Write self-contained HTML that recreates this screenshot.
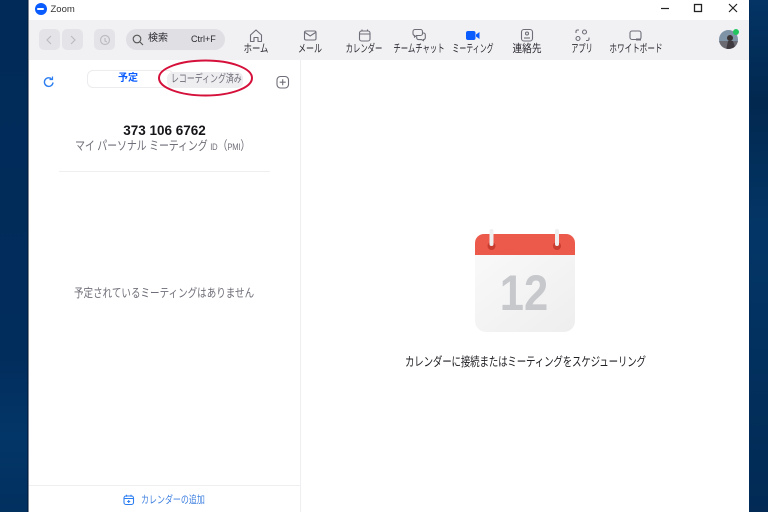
<!DOCTYPE html>
<html lang="ja"><head><meta charset="utf-8"><style>
html,body{margin:0;padding:0}
body{width:768px;height:512px;position:relative;overflow:hidden;background:#012d5c;font-family:"Liberation Sans","Noto Sans CJK JP",sans-serif}
#bgl{position:absolute;left:0;top:0;width:27px;height:512px;background:linear-gradient(180deg,#012a58 0%,#012d5c 70%,#033668 85%,#02305f 100%)}
#bgr{position:absolute;left:750px;top:0;width:18px;height:512px;background:linear-gradient(180deg,#033465 0%,#02284f 20%,#033667 45%,#02305e 70%,#022a55 100%)}
#win{position:absolute;left:29px;top:0;width:720px;height:512px;background:#fff}
#edge{position:absolute;left:28px;top:0;width:1px;height:512px;background:#7d8794}
#edge2{position:absolute;left:27px;top:0;width:1px;height:512px;background:#01204a}
#tb{position:absolute;left:29px;top:20px;width:720px;height:40px;background:#f1f1f4}
.t{position:absolute;white-space:nowrap;line-height:1;transform-origin:left center}
.n{position:absolute;top:43px;font-size:11px;color:#2a2a30;line-height:12px;white-space:nowrap}
svg{position:absolute;overflow:visible}
.btn{position:absolute;top:29px;width:21px;height:21px;border-radius:5px;background:#e4e4e8}
</style></head><body>
<div id="bgl"></div><div id="bgr"></div><div id="edge2"></div><div id="edge"></div><div id="win"></div><div id="tb"></div>

<div style="position:absolute;left:34.500px;top:2.500px;width:12px;height:12px;border-radius:50%;background:#0b5cff"></div>
<div style="position:absolute;left:37px;top:7.500px;width:7px;height:2px;background:#fff;border-radius:1px"></div>
<div class="t" style="left:50.500px;top:4.500px;font-size:9.500px;color:#333">Zoom</div>

<svg style="left:0;top:0" width="768" height="20" fill="none" stroke="#222" stroke-width="1.200">
<path d="M661 8.500h8"/><rect x="694.500" y="4.500" width="7" height="7" stroke-width="1.300"/><path d="M729 4l8 8M737 4l-8 8"/></svg>

<div class="btn" style="left:38.500px"></div><div class="btn" style="left:62px"></div><div class="btn" style="left:94px"></div>
<svg style="left:0;top:20px" width="240" height="40" fill="none" stroke="#bcbcc2" stroke-width="1.200">
<path d="M51 16l-4 4 4 4M71 16l4 4-4 4"/>
<circle cx="105" cy="20" r="4.500"/><path d="M105 18v3l2 1"/>
</svg>
<div style="position:absolute;left:126px;top:29px;width:99px;height:21px;border-radius:10.500px;background:#dfdfe4"></div>
<svg style="left:132px;top:34px" width="12" height="12" fill="none" stroke="#555" stroke-width="1.100"><circle cx="5" cy="5" r="3.800"/><path d="M8 8l3 3"/></svg>
<div class="t" style="left:148px;top:34px;font-size:10px;color:#2a2a30">検索</div>
<div class="t" style="left:191px;top:35px;font-size:9px;color:#2a2a30">Ctrl+F</div>

<svg style="left:0;top:0" width="768" height="60" fill="none" stroke="#6e6e78" stroke-width="1.100">
<path d="M250.500 35l5.500-5 5.500 5v6.500h-3.500v-4h-4v4h-3.500z" stroke-linejoin="round"/>
<rect x="304.500" y="31" width="11.500" height="9" rx="1.500"/><path d="M305 32.500l5.200 3.500 5.300-3.500"/>
<rect x="359.500" y="31" width="10.500" height="10" rx="2"/><path d="M359.500 34h10.500M362 29.500v2M367.500 29.500v2"/>
<path d="M415 29.500h5.500a2 2 0 0 1 2 2v2a2 2 0 0 1-2 2h-4l-2 1.500v-1.500a2 2 0 0 1-1.500-2v-2a2 2 0 0 1 2-2z"/>
<path d="M422.500 33h1a1.800 1.800 0 0 1 1.800 1.800v3a1.800 1.800 0 0 1-1.800 1.800v1l-2-1h-3a1.800 1.800 0 0 1-1.800-1.800v-1.500"/>
<rect x="521.500" y="29.500" width="11" height="11.500" rx="2.500"/><circle cx="527" cy="33.500" r="1.500"/><path d="M524 38h6"/>
<path d="M579 30h-1.500a1.500 1.500 0 0 0-1.500 1.500v1.500M586 40.500h1.500a1.500 1.500 0 0 0 1.500-1.500v-1.500"/>
<circle cx="584.500" cy="32" r="2"/><circle cx="578" cy="38.500" r="2"/>
<rect x="630" y="31" width="11" height="8.500" rx="2"/><path d="M636 39.500h5" stroke-width="2"/>
</svg>
<svg style="left:466px;top:30.500px" width="14" height="10"><rect x="0" y="0" width="9.500" height="9" rx="2" fill="#0b5cff"/><path d="M10 3.500L13.500 1v7L10 5.500z" fill="#0b5cff"/></svg>

<div class="n" style="left:255.500px;transform:translateX(-50%) scaleX(.76)">ホーム</div>
<div class="n" style="left:310px;transform:translateX(-50%) scaleX(.73)">メール</div>
<div class="n" style="left:363.500px;transform:translateX(-50%) scaleX(.67)">カレンダー</div>
<div class="n" style="left:419px;transform:translateX(-50%) scaleX(.67)">チームチャット</div>
<div class="n" style="left:472.500px;transform:translateX(-50%) scaleX(.63)">ミーティング</div>
<div class="n" style="left:526.500px;transform:translateX(-50%) scaleX(.88)">連絡先</div>
<div class="n" style="left:581.500px;transform:translateX(-50%) scaleX(.65)">アプリ</div>
<div class="n" style="left:635.500px;transform:translateX(-50%) scaleX(.69)">ホワイトボード</div>

<svg style="left:719px;top:30px" width="20" height="20"><defs><clipPath id="a"><circle cx="9.500" cy="9.500" r="9.500"/></clipPath></defs><g clip-path="url(#a)"><rect width="20" height="20" fill="#7f93a6"/><rect y="11" width="20" height="9" fill="#6b6a72"/><circle cx="11" cy="8" r="3" fill="#3a3233"/><path d="M7 20l2-9h5l3 9z" fill="#3f3a40"/></g></svg>
<div style="position:absolute;left:733px;top:29px;width:6px;height:6px;border-radius:50%;background:#22c55e"></div>

<div style="position:absolute;left:300px;top:60px;width:1px;height:452px;background:#efeff1"></div>
<div style="position:absolute;left:29px;top:485px;width:271px;height:1px;background:#efeff1"></div>

<svg style="left:43px;top:76px" width="12" height="12" fill="none" stroke="#2d7ef0" stroke-width="1.400"><path d="M10 6.500a4.300 4.300 0 1 1-1.500-3.700"/><path d="M9.500 0.500v3h-3" stroke-width="1.200"/></svg>

<div style="position:absolute;left:87px;top:70px;width:85px;height:16px;border:1px solid #ececef;border-radius:6px;background:#fff"></div>
<div class="t" style="left:118px;top:73.500px;font-size:10px;font-weight:700;color:#0b5cff">予定</div>
<div style="position:absolute;left:167px;top:72px;width:76px;height:16px;background:#eeeef1;border-radius:6px"></div>
<div class="t" style="left:171px;top:74px;font-size:11px;color:#6e6e78;transform:scaleX(.72)">レコーディング済み</div>
<svg style="left:155px;top:58px" width="100" height="40" fill="none"><ellipse cx="50.500" cy="20" rx="46.500" ry="17.500" stroke="#d5103a" stroke-width="2"/></svg>

<svg style="left:276px;top:75px" width="14" height="14" fill="none" stroke="#6e6e78" stroke-width="1.100"><rect x="1" y="1.500" width="11.500" height="11.500" rx="3.500"/><path d="M6.700 4.200v6M3.700 7.200h6"/></svg>

<div class="t" style="left:0;width:329px;text-align:center;top:123.500px;font-size:13.500px;font-weight:700;color:#16161a">373 106 6762</div>
<div class="t" style="left:75px;top:140px;font-size:12.500px;color:#6e6e78;letter-spacing:-.2px;transform:scaleX(.8)">マイ パーソナル ミーティング <span style="font-size:9.500px">ID</span>（<span style="font-size:9.500px">PMI</span>）</div>
<div style="position:absolute;left:59px;top:171px;width:211px;height:1px;background:#efeff1"></div>

<div class="t" style="left:74px;top:287px;font-size:12px;color:#6e6e78;transform:scaleX(.795)">予定されているミーティングはありません</div>

<svg style="left:123px;top:494px" width="12" height="12" fill="none" stroke="#2d7ef0" stroke-width="1.100"><rect x="1" y="2" width="9.500" height="8.500" rx="2"/><path d="M1 4.500h9.500M3.500 .8v2M8 .8v2M5.700 6v3M4.200 7.500h3"/></svg>
<div class="t" style="left:141px;top:495px;font-size:10.500px;color:#3d7fe0;transform:scaleX(.76)">カレンダーの追加</div>

<svg style="left:474px;top:228px" width="102" height="106">
<defs><linearGradient id="p" x1="0" y1="0" x2="1" y2="1"><stop offset="0" stop-color="#f9f9f9"/><stop offset="1" stop-color="#eeeeef"/></linearGradient></defs>
<path d="M1 27h100v66a11 11 0 0 1-11 11H12a11 11 0 0 1-11-11z" fill="url(#p)"/>
<path d="M1 27V15a9 9 0 0 1 9-9h82a9 9 0 0 1 9 9v12z" fill="#ec5a4c"/>
<circle cx="17.500" cy="18" r="4" fill="#c93c30"/><circle cx="83" cy="18" r="4" fill="#c93c30"/>
<rect x="15.500" y="1" width="4" height="17" rx="2" fill="#efeff0"/><rect x="81" y="1" width="4" height="17" rx="2" fill="#efeff0"/>
<text transform="translate(50 82) scale(.87 1)" text-anchor="middle" font-family="Liberation Sans,sans-serif" font-weight="700" font-size="50" fill="#c6c8cb">12</text>
</svg>

<div class="t" style="left:405px;top:356px;font-size:12.500px;color:#1f1f24;letter-spacing:-.25px;transform:scaleX(.76)">カレンダーに接続またはミーティングをスケジューリング</div>
</body></html>
